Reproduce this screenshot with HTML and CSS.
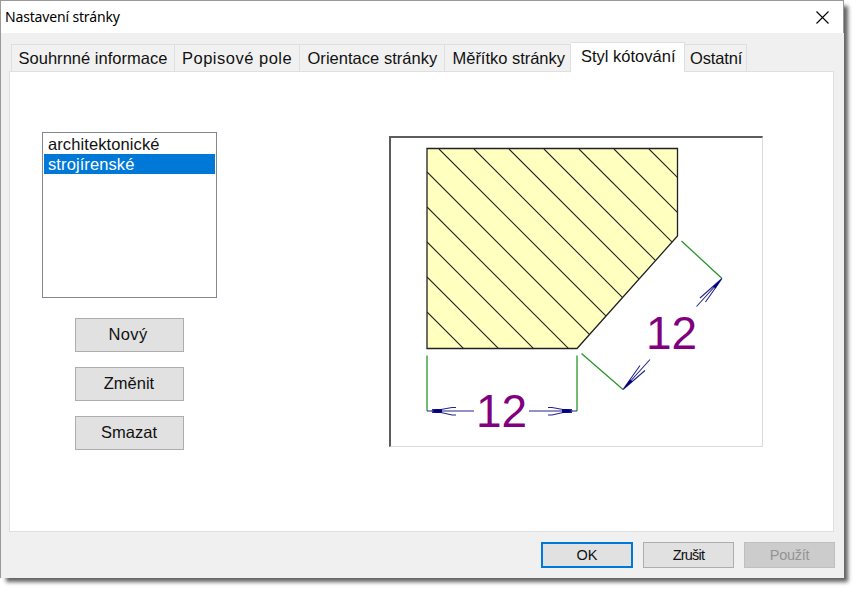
FILE: index.html
```html
<!DOCTYPE html>
<html lang="cs">
<head>
<meta charset="utf-8">
<title>Nastavení stránky</title>
<link rel="stylesheet" href="styles.css">
</head>
<body>
<div class="dialog">
  <header class="titlebar">
    <span class="title">Nastavení stránky</span>
    <svg class="close" width="13" height="13" viewBox="0 0 13 13"><path d="M.5.5l12 12M12.5.5l-12 12"/></svg>
  </header>
  <nav class="tabs">
    <div class="tab summary"><span>Souhrnné informace</span></div>
    <div class="tab field"><span>Popisové pole</span></div>
    <div class="tab orientation"><span>Orientace stránky</span></div>
    <div class="tab scale"><span>Měřítko stránky</span></div>
    <div class="tab active"><span>Styl kótování</span></div>
    <div class="tab other"><span>Ostatní</span></div>
  </nav>
  <main class="panel">
    <section class="styles">
      <div class="list">
        <div class="item">architektonické</div>
        <div class="item selected">strojírenské</div>
      </div>
      <div class="actions">
        <button class="action new">Nový</button>
        <button class="action">Změnit</button>
        <button class="action">Smazat</button>
      </div>
    </section>
    <div class="preview">
      <svg width="371" height="308" viewBox="391 138 371 308">
        <defs><clipPath id="part"><path d="M427 149H677V236L577 348H427Z"/></clipPath></defs>
        <path class="shape" d="M427 148.500H677.500V236L577 348.500H427Z"/>
        <path class="hatch" clip-path="url(#part)" d="M427 312l40 40M427 277l80 80M427 242l120 120M427 207l160 160M427 172l200 200M439 149l210 210M474 149l210 210M509 149l210 210M544 149l210 210M579 149l210 210M614 149l100 100M649 149l50 50"/>
        <path class="outline" d="M427 148.500H677.500V236L577 348.500H427Z"/>
        <path class="extension" d="M427 355.500V411M577 355.500V411M681.500 241L722 278.500M581.500 353.500L623 389.500"/>
        <path class="dimension" d="M427 411H474M456 407.500H452L441 409.500H432M456 415H452L441 412.500H432M529 411H577M548 407.500H552L563 409.500H572M548 415H552L563 412.500H572M722 278.500L696.500 306.500M722 278.500L700 298M722 278.500L705.500 302M623 389.500L650 359.500M623 389.500L640 365.500M623 389.500L645 370.500"/>
        <path class="tip" d="M431 411L436 409.300H442V412.700H436ZM573 411L568 409.300H562V412.700H568ZM721.500 279L713 286.500L715.500 288.500ZM623.500 389L630 379.500L632.500 381.500Z"/>
        <text class="value" x="476" y="427">12</text>
        <text class="value" x="646" y="349">12</text>
      </svg>
    </div>
  </main>
  <footer class="footer">
    <button class="command default"><span>OK</span></button>
    <button class="command"><span class="cancel">Zrušit</span></button>
    <button class="command disabled" disabled><span class="apply">Použít</span></button>
  </footer>
</div>
</body>
</html>
```
FILE: styles.css
```css
* { box-sizing: border-box; }
body { margin: 0; width: 859px; height: 593px; overflow: hidden; background: #fff; font-family: "Liberation Sans", Arial, sans-serif; font-size: 16.5px; color: #111; }
.dialog { width: 844px; height: 578px; background: #f0f0f0; border-left: 1px solid #999; border-top: 1px solid #999; box-shadow: 5px 5px 4px -1px rgba(0,0,0,.62); }
.titlebar { height: 32px; background: #fff; border-right: 1px solid #999; display: flex; justify-content: space-between; align-items: center; padding: 0 14px 0 4px; }
.title { font: 14px "Noto Sans", sans-serif; letter-spacing: -.16px; color: #000; white-space: nowrap; margin-top: -2px; }
.close path { stroke: #000; stroke-width: 1.1; fill: none; }
.tabs { height: 38px; display: flex; align-items: flex-end; padding-left: 10px; }
.tab { height: 27px; border: 1px solid #dfdfdf; border-left-width: 0; border-bottom: 0; line-height: 27px; white-space: nowrap; background: #f1f1f1; }
.tab span { display: block; }
.summary { width: 164px; border-left-width: 1px; padding-left: 6.5px; letter-spacing: .02px; }
.field { width: 125px; padding-left: 7px; letter-spacing: .5px; }
.orientation { width: 145px; padding-left: 7.5px; letter-spacing: .03px; }
.scale { width: 126px; padding-left: 7.5px; letter-spacing: -.02px; }
.active { width: 114px; height: 30px; margin-bottom: -1px; background: #fff; padding-left: 10px; line-height: 26px; position: relative; }
.other { width: 62px; padding-left: 5px; letter-spacing: -.15px; }
.panel { width: 825px; height: 461px; margin-left: 8px; background: #fff; border: 1px solid #dfdfdf; display: flex; align-items: flex-start; }
.styles { width: 175px; margin: 60px 0 0 32px; }
.list { height: 166px; border: 1px solid #828790; padding: 1px; }
.item { height: 20px; line-height: 21px; padding-left: 4px; letter-spacing: .1px; }
.selected { background: #0078d7; color: #fff; }
.actions { display: flex; flex-direction: column; gap: 15px; margin: 20px 0 0 32.5px; }
button { font: inherit; color: #111; background: #e1e1e1; border: 1px solid #adadad; padding: 0; }
.action { width: 109px; height: 34px; padding-bottom: 1px; }
.new { padding-right: 2px; letter-spacing: .4px; }
.preview { width: 374px; height: 311px; margin: 64px 0 0 172px; border: solid; border-width: 2px 1px 1px 2px; border-color: #5c5c5c #dcdad6 #dcdad6 #5c5c5c; }
.preview svg { display: block; }
.shape { fill: #ffffc0; }
.outline { fill: none; stroke: #222; stroke-width: 1.3; }
.hatch { fill: none; stroke: #222; stroke-width: 1.1; }
.extension { fill: none; stroke: #2a962a; stroke-width: 1.3; }
.dimension { fill: none; stroke: #242490; stroke-width: 1.1; }
.tip { fill: #000080; }
.value { font-size: 46px; fill: #800080; }
.footer { display: flex; justify-content: flex-end; gap: 10px; padding: 10px 9px 0 0; }
.command { width: 91px; height: 26px; font-size: 14.5px; }
.default { width: 92px; border: 2px solid #0078d7; }
.command span { display: inline-block; }
.cancel { letter-spacing: -.8px; }
.disabled { background: #ccc; border-color: #bfbfbf; color: #949494; }
.apply { letter-spacing: -.3px; }
```
